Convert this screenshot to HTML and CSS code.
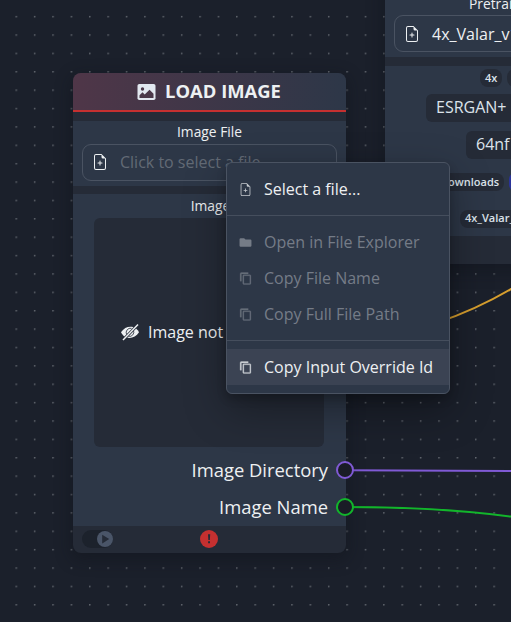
FILE: index.html
```html
<!DOCTYPE html>
<html lang="en">
<head>
<meta charset="utf-8">
<title>Node editor</title>
<link rel="stylesheet" href="styles.css">
</head>
<body>
<svg class="defs" width="0" height="0">
  <symbol id="file-add" viewBox="0 0 16 16"><path d="M8.500 6a.5.5 0 0 0-1 0v1.500H6a.5.5 0 0 0 0 1h1.500V10a.5.5 0 0 0 1 0V8.500H10a.5.5 0 0 0 0-1H8.500V6z" transform="translate(0 1)"/><path d="M14 4.500V14a2 2 0 0 1-2 2H4a2 2 0 0 1-2-2V2a2 2 0 0 1 2-2h5.500L14 4.500zm-3 0A1.500 1.500 0 0 1 9.500 3V1H4a1 1 0 0 0-1 1v12a1 1 0 0 0 1 1h8a1 1 0 0 0 1-1V4.500h-2z"/></symbol>
  <symbol id="copy" viewBox="0 0 24 24"><path d="M20 7v14H9V7h11m0-2H9a2 2 0 0 0-2 2v14a2 2 0 0 0 2 2h11a2 2 0 0 0 2-2V7a2 2 0 0 0-2-2zM17 1H4.500a2.500 2.500 0 0 0-2.500 2.500V17h2.500V3.500H17z" stroke="currentColor" stroke-width=".5"/></symbol>
  <symbol id="folder" viewBox="0 0 24 24"><path d="M9.500 4H3a2.200 2.200 0 0 0-2 2v12a2.200 2.200 0 0 0 2 2h18a2.200 2.200 0 0 0 2-2V8.500a2.200 2.200 0 0 0-2-2h-9z"/></symbol>
</svg>
<main class="canvas">
  <svg class="wires" width="511" height="622">
    <defs><pattern id="dots" x="15.500" y="15.900" width="18.380" height="18.380" patternUnits="userSpaceOnUse"><circle class="dot" cx=".8" cy=".8" r=".78"/></pattern></defs>
    <rect width="511" height="622" fill="url(#dots)"/>
    <path class="wire wire-orange" d="M345 344C412 334 465 317 516 286"/>
    <path class="wire wire-purple" d="M345 470.300L511 471"/>
    <path class="wire wire-green" d="M345 507C405 507 455 509 514 517"/>
  </svg>

  <section class="node load-node">
    <header class="node-header">
      <svg class="picture" viewBox="0 0 18 16"><rect width="18" height="16" rx="1.800" fill="#e2e8f0"/><circle cx="5" cy="5" r="1.700" fill="#4b3849"/><path d="M2 14v-2.700l3-3 2.200 2.200L12 5.700l4 4V14z" fill="#4b3849"/></svg>
      <h1>LOAD IMAGE</h1>
    </header>
    <div class="panel file-panel">
      <div class="label">Image File</div>
      <div class="field"><svg class="field-icon"><use href="#file-add"/></svg><span class="placeholder">Click to select a file...</span></div>
    </div>
    <div class="panel output-panel">
      <div class="label image-label">Image</div>
      <div class="preview">
        <svg class="eye" viewBox="0 0 18 18"><path d="M0 9.300C3.500 3.200 11 2.300 15 5.400Q17 7 18 9.300C14.500 15.300 7 16.300 3 13.200Q1 11.500 0 9.300z" fill="#edf0f2"/><path d="M5.600 11.500A4.400 4.400 0 0 1 10.500 5.300M12.500 7.500A4.300 4.300 0 0 1 7.500 13.300" fill="none" stroke="#252b37" stroke-width=".8"/><path d="M1.800 17.300L16.800 1.800" stroke="#252b37" stroke-width="3"/><path d="M2 17L17 1.500" stroke="#edf0f2" stroke-width="1.500"/></svg>
        <span>Image not</span>
      </div>
      <div class="output"><span>Image Directory</span><i class="port purple"></i></div>
      <div class="output"><span>Image Name</span><i class="port green"></i></div>
    </div>
    <footer class="node-footer">
      <div class="toggle"><svg class="knob" viewBox="0 0 16 16"><circle cx="8" cy="8" r="8"/><path d="M5.200 3.800v8.600l7-4.300z"/></svg></div>
      <div class="alert"><svg class="alert-icon" viewBox="0 0 18 18"><circle cx="9" cy="9" r="9"/><path d="M8 4.300h2.200l-.35 5.800h-1.500zM8.100 11.300H10v2H8.100z"/></svg></div>
    </footer>
  </section>

  <section class="node model-node">
    <div class="panel model-panel">
      <div class="model-label">Pretrained Model</div>
      <div class="field"><svg class="field-icon"><use href="#file-add"/></svg><span>4x_Valar_v1.pth</span></div>
    </div>
    <div class="panel tags">
      <div class="row row-scale"><span class="tag small">4x</span><span class="tag small">RGB</span></div>
      <div class="row row-arch"><span class="tag">ESRGAN+</span></div>
      <div class="row row-size"><span class="tag">64nf</span></div>
      <div class="row row-dir"><span class="tag small">Downloads</span><span class="tag link"></span></div>
      <div class="row row-name"><span class="tag small">4x_Valar_v1</span></div>
    </div>
    <footer class="node-footer"></footer>
  </section>

  <nav class="menu">
    <div class="item"><svg><use href="#file-add"/></svg><span>Select a file...</span></div>
    <hr>
    <div class="item disabled"><svg class="solid"><use href="#folder"/></svg><span>Open in File Explorer</span></div>
    <div class="item disabled"><svg><use href="#copy"/></svg><span>Copy File Name</span></div>
    <div class="item disabled"><svg><use href="#copy"/></svg><span>Copy Full File Path</span></div>
    <hr>
    <div class="item active"><svg><use href="#copy"/></svg><span>Copy Input Override Id</span></div>
  </nav>
</main>
</body>
</html>
```
FILE: styles.css
```css
* { box-sizing: border-box; }
body {
  margin: 0;
  background: #1b202b;
  color: #edf0f2;
  font: 16px/24px "Open Sans", "Noto Sans", sans-serif;
}
svg { display: block; flex: none; fill: currentColor; }
.defs { position: absolute; }
.canvas { position: relative; width: 511px; height: 622px; overflow: hidden; white-space: nowrap; }
.wires { position: absolute; inset: 0; }
.dot { fill: #747980; }
.wire { fill: none; stroke-width: 2; }
.wire-orange { stroke: #d69e2e; }
.wire-purple { stroke: #805ad5; }
.wire-green { stroke: #12b52b; }

.node {
  position: absolute;
  display: flex;
  flex-direction: column;
  width: 273px;
  border-radius: 8px;
  background: #252b37;
  box-shadow: 0 5px 16px 2px rgba(15, 17, 25, .4);
}
.load-node { left: 73px; top: 73px; height: 480px; }
.model-node { left: 385px; top: -60px; height: 324px; }
.node-header {
  display: flex;
  align-items: center;
  justify-content: center;
  gap: 9px;
  height: 39px;
  padding-right: 1px;
  border-bottom: 2px solid #c53030;
  border-radius: 8px 8px 0 0;
  background: linear-gradient(90deg, #4f3648, #2d3748);
}
.picture { width: 19px; height: 16px; }
h1 { margin: 0 0 2px; font-size: 18.400px; line-height: 24px; font-weight: 700; }
.panel { background: #2d3747; }
.file-panel { margin-top: 9px; height: 65px; padding: 0 9px; }
.label { height: 23px; text-align: center; font-size: 13.800px; line-height: 22px; }
.image-label { padding-left: 2px; line-height: 23px; }
.field {
  display: flex;
  align-items: center;
  gap: 12px;
  height: 37px;
  padding: 0 0 1px 9px;
  border: 1px solid #4a5362;
  border-radius: 9px;
}
.field-icon { width: 16px; height: 16px; }
.placeholder { color: #626a75; }
.output-panel { margin-top: 8px; height: 332px; }
.preview {
  display: flex;
  align-items: center;
  gap: 9px;
  width: 230px;
  height: 229px;
  margin: 1px 0 4px 21px;
  padding: 0 0 2px 27px;
  border-radius: 6px;
  background: #252b37;
}
.eye { width: 18px; height: 18px; }
.output {
  display: flex;
  align-items: center;
  justify-content: flex-end;
  gap: 8px;
  height: 37px;
  margin-right: -8px;
  font-size: 18.400px;
}
.port { width: 18px; height: 18px; border: 2px solid; border-radius: 50%; background: #1a1c26; }
.purple { color: #805ad5; }
.green { color: #12b52b; }
.node-footer { display: grid; grid-template-columns: 1fr auto 1fr; align-items: center; height: 27px; padding: 0 10px 1px 9px; }
.toggle { width: 31px; height: 18px; padding: 1px 0 0 15px; border-radius: 9px; background: #1c222c; }
.knob { width: 16px; height: 16px; fill: #4a5568; }
.knob path, .alert-icon path { fill: #252b37; }
.alert-icon { width: 18px; height: 18px; fill: #c53030; }

.model-panel { height: 117px; padding: 53px 9px 0; border-radius: 8px 8px 0 0; }
.model-panel .field { padding-bottom: 0; }
.model-label { height: 22px; padding-left: 75px; font-size: 13.800px; line-height: 22px; }
.tags { height: 170px; margin-top: 9px; padding-top: 3px; }
.row { display: flex; gap: 5px; width: 240px; overflow: hidden; }
.tag { flex: none; height: 28px; padding: 0 10px; border-radius: 6px; background: #252b37; color: #dce3eb; line-height: 27px; }
.tag.small { height: 18px; padding: 0 5px; border-radius: 8px; font-size: 11px; font-weight: 600; line-height: 17px; }
.row-scale { padding-left: 95px; }
.row-arch { margin-top: 7px; padding-left: 41px; }
.row-size { margin-top: 9px; padding-left: 81px; }
.row-dir { margin-top: 14px; padding-left: 50px; }
.row-name { margin-top: 19px; padding-left: 75px; }
.row-name .tag { line-height: 16px; }
.link { height: 18px; background: #2a3399; }

.menu {
  position: absolute;
  left: 226px;
  top: 162px;
  width: 224px;
  height: 232px;
  padding: 8px 0;
  border: 1px solid #4a5362;
  border-radius: 6px;
  background: #2d3747;
  box-shadow: 0 5px 10px rgba(0, 0, 0, .2), 0 15px 40px rgba(0, 0, 0, .35);
}
.item { display: flex; align-items: center; gap: 12px; height: 36px; padding-left: 12px; }
.item svg { width: 13px; height: 13px; opacity: .8; }
.item .solid { opacity: 1; }
.disabled { color: #757c87; }
.active { background: #3b4353; }
hr { height: 1px; margin: 8px 0; border: 0; background: #454e5d; }
```
